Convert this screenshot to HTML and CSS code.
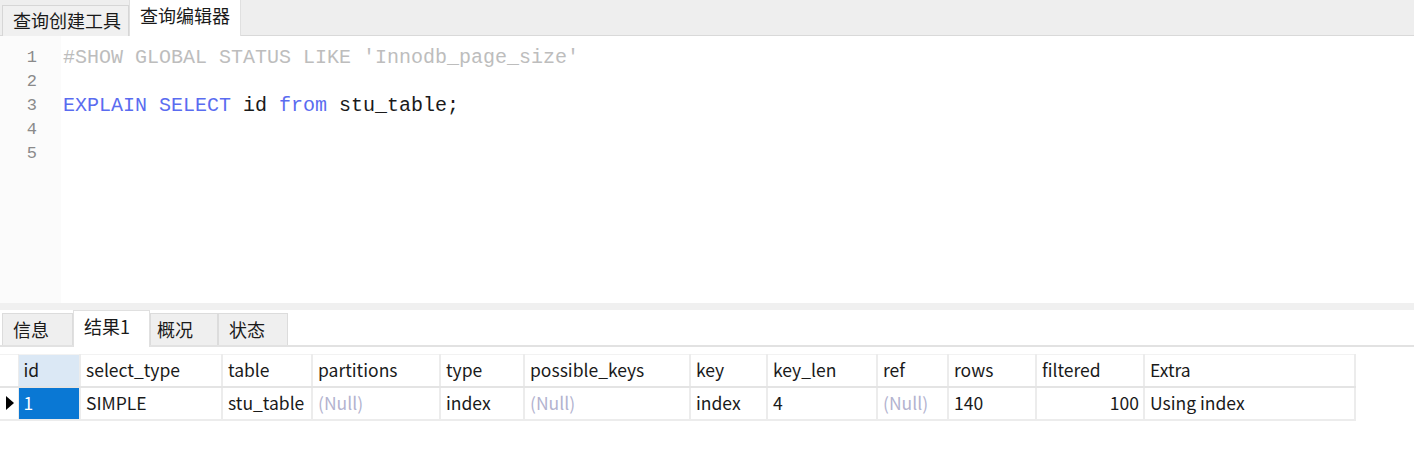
FILE: index.html
```html
<!DOCTYPE html>
<html lang="zh">
<head>
<meta charset="utf-8">
<title>查询编辑器</title>
<link rel="stylesheet" href="styles.css">
</head>
<body>
<div class="app">
  <div class="top-tabs">
    <div class="tab">查询创建工具</div>
    <div class="tab active">查询编辑器</div>
  </div>
  <div class="editor">
    <div class="gutter">
      <div class="ln">1</div>
      <div class="ln">2</div>
      <div class="ln">3</div>
      <div class="ln">4</div>
      <div class="ln">5</div>
    </div>
    <div class="code">
      <div class="line"><span class="cm">#SHOW GLOBAL STATUS LIKE 'Innodb_page_size'</span></div>
      <div class="line"></div>
      <div class="line"><span class="kw">EXPLAIN</span> <span class="kw">SELECT</span> id <span class="kw">from</span> stu_table;</div>
      <div class="line"></div>
      <div class="line"></div>
    </div>
  </div>
  <div class="splitter"></div>
  <div class="result-tabs">
    <div class="rtab">信息</div>
    <div class="rtab active">结果1</div>
    <div class="rtab">概况</div>
    <div class="rtab">状态</div>
  </div>
  <div class="grid-area">
    <table class="grid">
      <colgroup>
        <col style="width:18px"><col style="width:62px"><col style="width:142px"><col style="width:90px"><col style="width:128px"><col style="width:84px"><col style="width:166px"><col style="width:77px"><col style="width:110px"><col style="width:71px"><col style="width:88px"><col style="width:108px"><col style="width:211px">
      </colgroup>
      <thead>
        <tr>
          <th class="ind"></th>
          <th class="sel-h">id</th>
          <th>select_type</th>
          <th>table</th>
          <th>partitions</th>
          <th>type</th>
          <th>possible_keys</th>
          <th>key</th>
          <th>key_len</th>
          <th>ref</th>
          <th>rows</th>
          <th>filtered</th>
          <th>Extra</th>
        </tr>
      </thead>
      <tbody>
        <tr>
          <td class="ind"><span class="arrow"></span></td>
          <td class="sel">1</td>
          <td>SIMPLE</td>
          <td>stu_table</td>
          <td class="null">(Null)</td>
          <td>index</td>
          <td class="null">(Null)</td>
          <td>index</td>
          <td>4</td>
          <td class="null">(Null)</td>
          <td>140</td>
          <td class="num">100</td>
          <td>Using index</td>
        </tr>
      </tbody>
    </table>
  </div>
</div>
</body>
</html>
```

FILE: styles.css
```css
* { box-sizing: border-box; }
html, body {
  margin: 0;
  padding: 0;
  background: #ffffff;
}
body {
  width: 1414px;
  height: 461px;
  overflow: hidden;
  font-family: "Noto Sans CJK SC", "Open Sans", sans-serif;
  color: #1a1a1a;
}
.app {
  display: flex;
  flex-direction: column;
  height: 461px;
}
.top-tabs {
  height: 36px;
  background: #eeeeee;
  border-bottom: 1px solid #d9d9d9;
  display: flex;
  align-items: flex-end;
  padding-left: 2px;
}
.tab {
  height: 31px;
  padding: 0 7px 0 10px;
  background: #f0f0f0;
  border: 1px solid #d6d6d6;
  border-bottom: none;
  font-size: 18px;
  line-height: 29px;
  color: #1a1a1a;
  margin-bottom: -1px;
}
.tab.active {
  height: 37px;
  background: #ffffff;
  border-color: #e0e0e0;
  line-height: 31px;
  padding: 0 10px 0 10px;
}
.editor {
  height: 267px;
  display: flex;
}
.gutter {
  width: 61px;
  background: #fbfbfb;
  padding-top: 10px;
}
.ln {
  height: 24px;
  line-height: 24px;
  text-align: right;
  padding-right: 24px;
  font-family: "Liberation Mono", monospace;
  font-size: 17px;
  color: #8a8a8a;
}
.code {
  flex: 1;
  padding-top: 10px;
  padding-left: 2px;
  font-family: "Liberation Mono", monospace;
  font-size: 20px;
  color: #1a1a1a;
}
.line {
  height: 24px;
  line-height: 24px;
  white-space: pre;
}
.cm { color: #bdbdbd; }
.kw { color: #5a6cf0; }
.splitter {
  height: 7px;
  background: #f0f0f0;
}
.result-tabs {
  height: 37px;
  display: flex;
  align-items: flex-end;
  padding-left: 2px;
  border-bottom: 2px solid #e2e2e2;
}
.rtab {
  height: 32px;
  background: #efefef;
  border: 1px solid #dcdcdc;
  border-bottom: none;
  font-size: 18px;
  line-height: 30px;
  padding-left: 10px;
}
.rtab:nth-child(1) { width: 71px; }
.rtab:nth-child(2) { width: 77px; }
.rtab:nth-child(3) { width: 68px; padding-left: 6px; }
.rtab:nth-child(4) { width: 70px; padding-left: 10px; }
.rtab.active {
  height: 37px;
  background: #ffffff;
  border-color: #e0e0e0;
  line-height: 31px;
  margin-bottom: -2px;
  padding-left: 10px;
}
.grid-area {
  padding-top: 7px;
}
.grid {
  border-collapse: collapse;
  table-layout: fixed;
  width: 1355px;
  font-size: 17.5px;
}
.grid th, .grid td {
  height: 33px;
  padding: 0 5px;
  text-align: left;
  font-weight: normal;
  white-space: nowrap;
  overflow: hidden;
  border-right: 2px solid #ececec;
  border-bottom: 2px solid #ececec;
  color: #1a1a1a;
}
.grid th {
  border-top: 1px solid #f2f2f2;
  border-bottom: 2px solid #e4e4e4;
  height: 32px;
  padding-bottom: 2px;
}
.grid td {
  height: 33px;
  padding-bottom: 2px;
}
.grid th.ind, .grid td.ind {
  padding: 0;
  border-right: 1px solid #ececec;
}
.grid th.sel-h {
  background: #dbe8f5;
}
.grid td.sel {
  background: #0a78d4;
  color: #ffffff;
}
.grid td.null { color: #b3b3cf; }
.grid td.num { text-align: right; padding-right: 4px; }
.arrow {
  display: block;
  width: 0;
  height: 0;
  margin-left: 6px;
  border-top: 7px solid transparent;
  border-bottom: 7px solid transparent;
  border-left: 8px solid #000000;
}
```
